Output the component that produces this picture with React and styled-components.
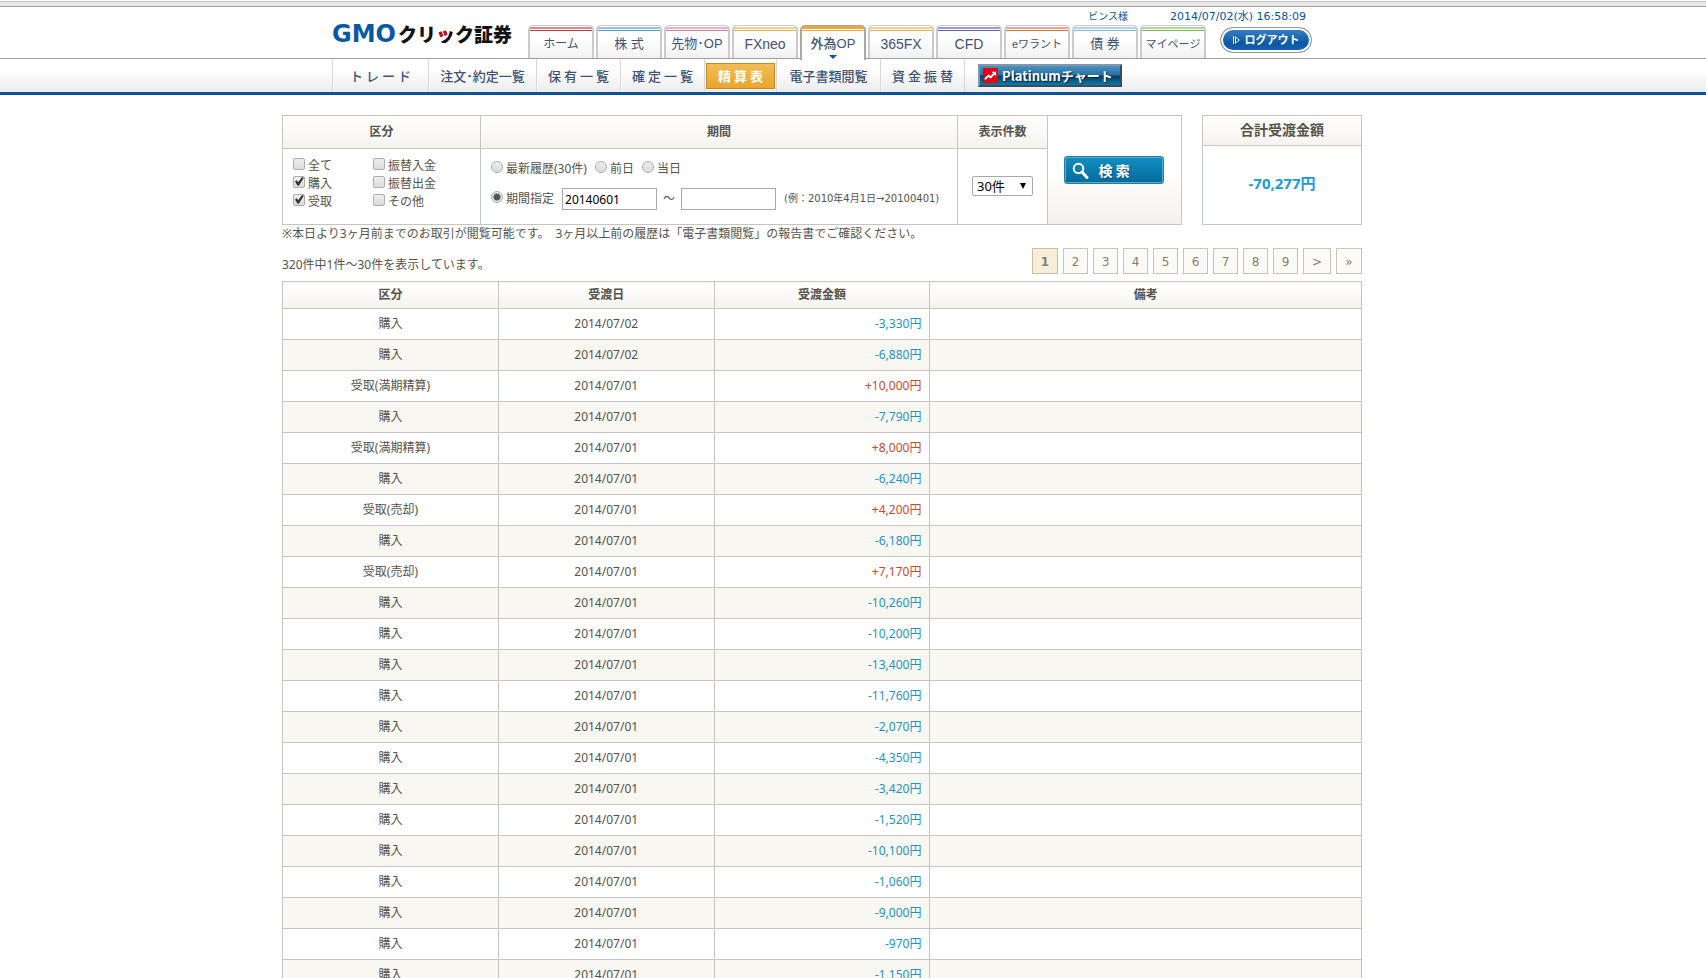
import React, { useState } from 'react';
import styled, { createGlobalStyle, css } from 'styled-components';

const COLORS = {
  text: '#55534c',
  navy: '#3f5274',
  blue: '#0a529c',
  minus: '#1f93c4',
  plus: '#c9492f',
  border: '#c9c3c1',
  stripe: '#f8f7f2',
};

const FONT = "'Noto Sans', 'Noto Sans CJK JP', sans-serif";
const FONT_NAV = "'Liberation Sans', 'Noto Sans CJK JP', sans-serif";
const FONT_WIDE = "'DejaVu Sans', 'Noto Sans CJK JP', sans-serif";

const GlobalStyle = createGlobalStyle`
  * { box-sizing: border-box; }
  body {
    margin: 0;
    background: #fff;
    color: ${COLORS.text};
    font-family: ${FONT};
    font-size: 12px;
    line-height: 18px;
  }
  a { color: inherit; text-decoration: none; }
  input, select, button { font-family: inherit; margin: 0; }
`;

const TopStrip = styled.div`
  height: 7px;
  background: #e9e9e9;
  border-top: 1px solid #fff;
  border-bottom: 1px solid #a3a3a3;
  box-shadow: inset 0 1px 0 #c4c4c4;
`;

const Centered = styled.div`
  width: 980px;
  max-width: 100%;
  margin: 0 auto;
`;

const HeaderBar = styled.header`
  padding-right: 62px;
  border-bottom: 1px solid #a0a0a0;
`;

const UserLine = styled.div`
  display: flex;
  justify-content: flex-end;
  gap: 42px;
  height: 18px;
  padding: 1px 6px 0 0;
  color: ${COLORS.blue};
  font-family: ${FONT_WIDE};
  font-size: 11px;
`;

const UserName = styled.span`
  font-size: 10px;
`;

const HeaderRow = styled.div`
  display: flex;
  align-items: flex-start;
`;

const Logo = styled.a`
  display: flex;
  align-items: center;
  flex: 0 0 196px;
  height: 18px;
  color: #111;
  font-family: 'Noto Sans CJK JP', sans-serif;
  font-size: 19px;
  font-weight: 900;
  line-height: 18px;
  white-space: nowrap;
`;

const LogoMark = styled.span`
  margin-right: 2px;
  color: #0a58a4;
  font-family: 'DejaVu Sans', sans-serif;
  font-size: 24px;
  font-weight: 700;
`;

const LogoAccent = styled.span`
  color: transparent;
  background:
    linear-gradient(#e2001a, #e2001a) 0 0 / 62% 66% no-repeat,
    #111;
  background-clip: text;
  -webkit-background-clip: text;
`;

const Tabs = styled.nav`
  display: flex;
  gap: 2px;
`;

const Tab = styled.a`
  position: relative;
  display: flex;
  align-items: center;
  justify-content: center;
  width: 66px;
  height: 33px;
  padding-top: 4px;
  border: 2px solid #cbcbcb;
  border-width: 1px 2px 0;
  border-radius: 5px 5px 0 0;
  color: ${COLORS.navy};
  font-family: ${FONT_NAV};
  font-size: ${(props) => props.$size}px;
  background:
    linear-gradient(${(props) => props.$color}, ${(props) => props.$color}) 0 4px / 100% 1px no-repeat,
    linear-gradient(${(props) => props.$color}99, ${(props) => props.$color}99) 0 1px / 100% 2px no-repeat,
    linear-gradient(#fff 40%, #f1f1f1);
  white-space: nowrap;

  ${(props) => props.$active && css`
    height: 35px;
    margin-bottom: -2px;
    padding-bottom: 2px;
    border-color: #b0a48c #a8a8a8;
    font-weight: 500;
    background:
      linear-gradient(#e9a93a, #e9a93a) 0 0 / 100% 3px no-repeat,
      linear-gradient(#e9a93a, #e9a93a) 0 4px / 100% 1px no-repeat,
      #fff;

    &::after {
      content: '';
      position: absolute;
      bottom: 1px;
      left: 50%;
      margin-left: -4px;
      border: 4px solid transparent;
      border-top-color: ${COLORS.blue};
      border-bottom: 0;
    }
  `}
`;

const Logout = styled.button`
  display: flex;
  align-items: center;
  justify-content: center;
  gap: 5px;
  width: 92px;
  height: 26px;
  margin: 2px 0 0 14px;
  padding: 0;
  border: 1px solid #969696;
  border-radius: 13px;
  color: #fff;
  font-size: 11px;
  font-weight: 700;
  line-height: 18px;
  background: linear-gradient(#3d84c8, #0a57a6 65%, #1a66b2);
  box-shadow: inset 0 0 0 2px #fff;
  cursor: pointer;
`;

const SubNavBar = styled.div`
  padding-right: 62px;
  border-bottom: 3px solid ${COLORS.blue};
  background: linear-gradient(#fff 30%, #ececec);
`;

const SubNav = styled.nav`
  display: flex;
  align-items: stretch;
  height: 33px;
`;

const SubNavItem = styled.a`
  display: flex;
  align-items: center;
  justify-content: center;
  width: ${(props) => props.$width}px;
  border-left: 1px solid #d8d8d8;
  box-shadow: inset 1px 0 0 #fff;
  color: ${COLORS.navy};
  font-family: 'Noto Sans CJK JP', sans-serif;
  font-size: 13px;
  font-weight: 500;
  white-space: nowrap;

  ${(props) => props.$active && css`
    padding: 1px 1px 0;
    span {
      flex: 1;
      height: 26px;
      border: 1px solid #c48a26;
      color: #fff;
      font-weight: 700;
      line-height: 24px;
      text-align: center;
      background: linear-gradient(#f1bd55, #e9a62c);
    }
  `}
`;

const PlatinumLink = styled.a`
  display: flex;
  align-items: center;
  gap: 4px;
  width: 144px;
  height: 23px;
  margin: 5px 0 0 13px;
  padding-left: 3px;
  border: 2px solid #5b6f80;
  border-color: #8298aa #3c4b59 #3c4b59 #8298aa;
  color: #fff;
  font-family: 'Noto Sans CJK JP', sans-serif;
  font-size: 13px;
  font-weight: 700;
  text-shadow: 1px 1px 1px #04263f;
  background: linear-gradient(#4a92c4, #266f9f 48%, #063c62 52%, #0b7aa8);
  white-space: nowrap;
`;

const Main = styled.main`
  padding: 20px 62px 0 0;
`;

const Content = styled(Centered)`
  width: 1080px;
`;

const SearchArea = styled.div`
  display: flex;
  gap: 20px;
`;

const FilterForm = styled.form`
  display: grid;
  grid-template-columns: 197px 1fr 90px 134px;
  flex: 1;
  border: 1px solid ${COLORS.border};
`;

const FilterCell = styled.section`
  display: flex;
  flex-direction: column;

  & + & { border-left: 1px solid ${COLORS.border}; }
`;

const CellTitle = styled.h2`
  margin: 0;
  padding: 7px 0;
  border-bottom: 1px solid ${COLORS.border};
  font-size: 12px;
  font-weight: 700;
  line-height: 18px;
  text-align: center;
  background: linear-gradient(#fff, #f5f3ee);
`;

const SearchCell = styled.div`
  display: flex;
  align-items: center;
  justify-content: center;
  padding-right: 2px;
  border-left: 1px solid ${COLORS.border};
  background: linear-gradient(#fff 50%, #f3f1ec);
`;

const CheckGrid = styled.div`
  display: grid;
  grid-template-columns: 80px 1fr;
  padding: 8px 10px 13px;
`;

const Choice = styled.label`
  display: flex;
  align-items: center;
  gap: 3px;
  white-space: nowrap;
`;

const CheckInput = styled.input.attrs({ type: 'checkbox' })`
  appearance: none;
  width: 12px;
  height: 12px;
  margin-bottom: 5px;
  border: 1px solid #adadad;
  border-radius: 2px;
  background: linear-gradient(#ededed, #dcdcdc);

  &:checked::before {
    content: '';
    display: block;
    width: 10px;
    height: 10px;
    background: #333;
    clip-path: polygon(10% 50%, 28% 38%, 42% 58%, 80% 4%, 98% 12%, 48% 92%, 36% 92%);
  }
`;

const RadioInput = styled.input.attrs({ type: 'radio' })`
  appearance: none;
  width: 12px;
  height: 12px;
  margin-bottom: 4px;
  border: 1px solid #adadad;
  border-radius: 50%;
  background: linear-gradient(#ededed, #dcdcdc);

  &:checked {
    background: radial-gradient(circle, #555 0 3px, #e4e4e4 4px);
  }
`;

const PeriodBody = styled.div`
  display: flex;
  flex-direction: column;
  gap: 10px;
  padding: 11px 10px 0;
`;

const PeriodRow = styled.div`
  display: flex;
  align-items: center;
  gap: 8px;
`;

const DateInput = styled.input`
  width: 95px;
  height: 22px;
  padding: 0 2px;
  border: 1px solid #a9a9a9;
  color: #000;
  font-size: 12px;
  background: #fff;
`;

const Tilde = styled.span`
  width: 12px;
  margin: 0 -2px;
`;

const Example = styled.span`
  font-family: ${FONT_WIDE};
  font-size: 10px;
  white-space: nowrap;
`;

const CountBody = styled.div`
  display: flex;
  flex: 1;
  align-items: center;
  justify-content: center;
  padding-bottom: 2px;
`;

const SelectBox = styled.div`
  position: relative;

  &::after {
    content: '';
    position: absolute;
    top: 7px;
    right: 7px;
    border: 3px solid transparent;
    border-top: 6px solid #000;
    border-bottom: 0;
    pointer-events: none;
  }
`;

const CountSelect = styled.select`
  appearance: none;
  display: block;
  width: 61px;
  height: 20px;
  padding: 0 4px;
  border: 1px solid #a9a9a9;
  border-radius: 2px;
  color: #000;
  font-size: 13px;
  line-height: 18px;
  background: #fff;
`;

const SearchButton = styled.button`
  display: flex;
  align-items: center;
  gap: 10px;
  width: 100px;
  height: 28px;
  padding: 0 7px;
  border: 1px solid #2a7a9f;
  border-radius: 3px;
  color: #fff;
  font-family: 'Noto Sans CJK JP', sans-serif;
  font-size: 14px;
  font-weight: 700;
  line-height: 20px;
  text-shadow: 1px 1px 1px #05557c;
  background: linear-gradient(#118fc4, #06699a);
  box-shadow: inset 0 0 0 1px #52aecf;
  cursor: pointer;
`;

const TotalBox = styled.section`
  display: flex;
  flex-direction: column;
  width: 160px;
  border: 1px solid ${COLORS.border};
`;

const TotalTitle = styled(CellTitle)`
  padding: 5px 0 6px;
  font-size: 14px;
`;

const TotalValue = styled.strong`
  display: flex;
  flex: 1;
  align-items: center;
  justify-content: center;
  padding-bottom: 4px;
  color: #1c9ad6;
  font-size: 15px;
`;

const Note = styled.p`
  margin: 0;
`;

const ListHeader = styled.div`
  display: flex;
  align-items: flex-end;
  justify-content: space-between;
  margin: 5px 0 7px;
`;

const Status = styled.span`
  padding-top: 8px;
`;

const Pager = styled.nav`
  display: flex;
  gap: 5px;
`;

const PageLink = styled.a`
  width: ${(props) => props.$width || 25}px;
  height: 26px;
  border: 1px solid #c8c4b4;
  color: #857f6c;
  font-family: ${FONT_WIDE};
  font-size: 12px;
  line-height: 26px;
  text-align: center;
  background: #fbfaf6;

  ${(props) => props.$current && css`
    font-weight: 700;
    border-color: #cbc0a0;
    background: #f6eed9;
  `}
`;

const HistoryTable = styled.table`
  width: 100%;
  table-layout: fixed;
  border-collapse: collapse;
`;

const Th = styled.th`
  width: ${(props) => props.$width};
  height: 27px;
  padding: 0;
  border: 1px solid ${COLORS.border};
  font-weight: 700;
  background: linear-gradient(#fff, #f5f3ee);
`;

const Tr = styled.tr`
  &:nth-child(even) { background: ${COLORS.stripe}; }
`;

const Td = styled.td`
  height: 31px;
  padding: 0 8px;
  border: 1px solid ${COLORS.border};
  text-align: center;
`;

const AmountTd = styled(Td)`
  color: ${(props) => (props.$plus ? COLORS.plus : COLORS.minus)};
  text-align: right;
`;

const TABS = [
  { label: 'ホーム', color: '#c23a3a', size: 12 },
  { label: '株 式', color: '#5b97cf', size: 13 },
  { label: '先物･OP', color: '#cf7fa6', size: 13 },
  { label: 'FXneo', color: '#e3b54a', size: 14 },
  { label: '外為OP', color: '#e9a93a', size: 13, active: true },
  { label: '365FX', color: '#e3b54a', size: 14 },
  { label: 'CFD', color: '#6358a5', size: 14 },
  { label: 'eワラント', color: '#cf7248', size: 11 },
  { label: '債 券', color: '#7fb4d6', size: 13 },
  { label: 'マイページ', color: '#7fb85a', size: 11 },
];

const SUB_NAV = [
  { label: 'ト レ ー ド', width: 96 },
  { label: '注文･約定一覧', width: 108 },
  { label: '保 有 一 覧', width: 84 },
  { label: '確 定 一 覧', width: 84 },
  { label: '精 算 表', width: 72, active: true },
  { label: '電子書類閲覧', width: 104 },
  { label: '資 金 振 替', width: 84 },
];

const KINDS = ['全て', '振替入金', '購入', '振替出金', '受取', 'その他'];

const PAGES = ['1', '2', '3', '4', '5', '6', '7', '8', '9'];

const ROWS = [
  ['購入', '2014/07/02', '-3,330円'],
  ['購入', '2014/07/02', '-6,880円'],
  ['受取(満期精算)', '2014/07/01', '+10,000円'],
  ['購入', '2014/07/01', '-7,790円'],
  ['受取(満期精算)', '2014/07/01', '+8,000円'],
  ['購入', '2014/07/01', '-6,240円'],
  ['受取(売却)', '2014/07/01', '+4,200円'],
  ['購入', '2014/07/01', '-6,180円'],
  ['受取(売却)', '2014/07/01', '+7,170円'],
  ['購入', '2014/07/01', '-10,260円'],
  ['購入', '2014/07/01', '-10,200円'],
  ['購入', '2014/07/01', '-13,400円'],
  ['購入', '2014/07/01', '-11,760円'],
  ['購入', '2014/07/01', '-2,070円'],
  ['購入', '2014/07/01', '-4,350円'],
  ['購入', '2014/07/01', '-3,420円'],
  ['購入', '2014/07/01', '-1,520円'],
  ['購入', '2014/07/01', '-10,100円'],
  ['購入', '2014/07/01', '-1,060円'],
  ['購入', '2014/07/01', '-9,000円'],
  ['購入', '2014/07/01', '-970円'],
  ['購入', '2014/07/01', '-1,150円'],
];

const ChartIcon = () => (
  <svg width="15" height="15" viewBox="0 0 16 16" aria-hidden="true">
    <rect width="16" height="16" fill="#e60012" />
    <path d="M2 12 L6 8 L8 10 L13 5" fill="none" stroke="#fff" strokeWidth="2" />
    <path d="M9 4 H14 V9 Z" fill="#fff" />
  </svg>
);

const LogoutIcon = () => (
  <svg width="7" height="8" viewBox="0 0 7 8" aria-hidden="true">
    <path d="M0.5 0 V8 M2.5 0.8 L6.2 4 L2.5 7.2 Z" fill="none" stroke="#fff" />
  </svg>
);

const SearchIcon = () => (
  <svg width="17" height="17" viewBox="0 0 17 17" aria-hidden="true">
    <circle cx="6.5" cy="6.5" r="4.8" fill="none" stroke="#fff" strokeWidth="2" />
    <path d="M10 10 L15 15.5" stroke="#fff" strokeWidth="3" strokeLinecap="round" />
  </svg>
);

const Header = () => (
  <>
    <HeaderBar>
      <Centered>
        <UserLine>
          <UserName>ビンス様</UserName>
          <span>2014/07/02(水) 16:58:09</span>
        </UserLine>
        <HeaderRow>
          <Logo href="#">
            <LogoMark>GMO</LogoMark>
            クリ<LogoAccent>ッ</LogoAccent>ク証券
          </Logo>
          <Tabs>
            {TABS.map((tab) => (
              <Tab key={tab.label} href="#" $color={tab.color} $size={tab.size} $active={tab.active}>
                {tab.label}
              </Tab>
            ))}
          </Tabs>
          <Logout type="button">
            <LogoutIcon />
            ログアウト
          </Logout>
        </HeaderRow>
      </Centered>
    </HeaderBar>
    <SubNavBar>
      <Centered>
        <SubNav>
          {SUB_NAV.map((item) => (
            <SubNavItem key={item.label} href="#" $width={item.width} $active={item.active}>
              <span>{item.label}</span>
            </SubNavItem>
          ))}
          <SubNavItem as="span" $width={1} />
          <PlatinumLink href="#">
            <ChartIcon />
            Platinumチャート
          </PlatinumLink>
        </SubNav>
      </Centered>
    </SubNavBar>
  </>
);

const Filters = () => {
  const [kinds, setKinds] = useState(['購入', '受取']);
  const [period, setPeriod] = useState('range');
  const [from, setFrom] = useState('20140601');
  const [to, setTo] = useState('');

  const toggleKind = (kind) => {
    setKinds((prev) => (prev.includes(kind) ? prev.filter((k) => k !== kind) : [...prev, kind]));
  };

  const renderRadio = (value, label) => (
    <Choice>
      <RadioInput name="period" checked={period === value} onChange={() => setPeriod(value)} />
      {label}
    </Choice>
  );

  return (
    <FilterForm onSubmit={(e) => e.preventDefault()}>
      <FilterCell>
        <CellTitle>区分</CellTitle>
        <CheckGrid>
          {KINDS.map((kind) => (
            <Choice key={kind}>
              <CheckInput checked={kinds.includes(kind)} onChange={() => toggleKind(kind)} />
              {kind}
            </Choice>
          ))}
        </CheckGrid>
      </FilterCell>
      <FilterCell>
        <CellTitle>期間</CellTitle>
        <PeriodBody>
          <PeriodRow>
            {renderRadio('latest', '最新履歴(30件)')}
            {renderRadio('yesterday', '前日')}
            {renderRadio('today', '当日')}
          </PeriodRow>
          <PeriodRow>
            {renderRadio('range', '期間指定')}
            <DateInput aria-label="開始日" value={from} onChange={(e) => setFrom(e.target.value)} />
            <Tilde>～</Tilde>
            <DateInput aria-label="終了日" value={to} onChange={(e) => setTo(e.target.value)} />
            <Example>(例：2010年4月1日→20100401)</Example>
          </PeriodRow>
        </PeriodBody>
      </FilterCell>
      <FilterCell>
        <CellTitle id="count-title">表示件数</CellTitle>
        <CountBody>
          <SelectBox>
            <CountSelect aria-labelledby="count-title" defaultValue="30">
              <option value="30">30件</option>
            </CountSelect>
          </SelectBox>
        </CountBody>
      </FilterCell>
      <SearchCell>
        <SearchButton type="submit">
          <SearchIcon />
          検 索
        </SearchButton>
      </SearchCell>
    </FilterForm>
  );
};

const History = () => (
  <HistoryTable>
    <thead>
      <tr>
        <Th $width="20%">区分</Th>
        <Th $width="20%">受渡日</Th>
        <Th $width="20%">受渡金額</Th>
        <Th $width="40%">備考</Th>
      </tr>
    </thead>
    <tbody>
      {ROWS.map(([kind, date, amount], i) => (
        <Tr key={i}>
          <Td>{kind}</Td>
          <Td>{date}</Td>
          <AmountTd $plus={amount.startsWith('+')}>{amount}</AmountTd>
          <Td />
        </Tr>
      ))}
    </tbody>
  </HistoryTable>
);

const App = () => (
  <>
    <GlobalStyle />
    <TopStrip />
    <Header />
    <Main>
      <Content>
        <SearchArea>
          <Filters />
          <TotalBox>
            <TotalTitle>合計受渡金額</TotalTitle>
            <TotalValue>-70,277円</TotalValue>
          </TotalBox>
        </SearchArea>
        <Note>※本日より3ヶ月前までのお取引が閲覧可能です。　3ヶ月以上前の履歴は「電子書類閲覧」の報告書でご確認ください。</Note>
        <ListHeader>
          <Status>320件中1件～30件を表示しています。</Status>
          <Pager>
            {PAGES.map((page) => (
              <PageLink key={page} href="#" $current={page === '1'} $width={page === '1' ? 26 : 25}>
                {page}
              </PageLink>
            ))}
            <PageLink href="#" $width={28}>&gt;</PageLink>
            <PageLink href="#" $width={26}>»</PageLink>
          </Pager>
        </ListHeader>
        <History />
      </Content>
    </Main>
  </>
);

export default App;
